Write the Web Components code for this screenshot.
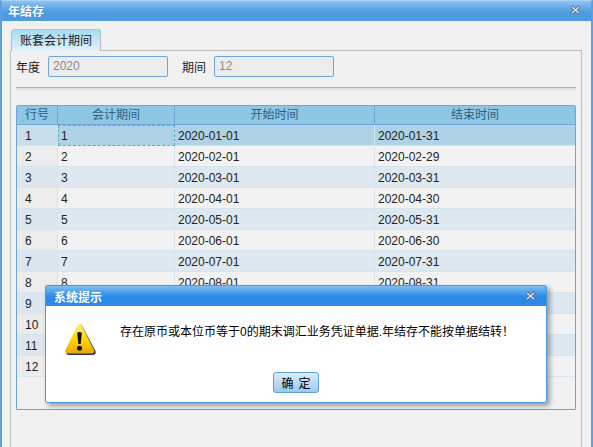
<!DOCTYPE html>
<html>
<head>
<meta charset="utf-8">
<style>
  html, body { margin: 0; height: 100%; background: #f1f1f1; overflow: hidden; }
  body { font: 12px "Liberation Sans", "Noto Sans CJK SC", sans-serif; color: #222; }
</style>
</head>
<body>
<year-window>
  <tab-panel label="账套会计期间">
    <div style="display:flex;align-items:center">
      <period-field label="年度" value="2020" style="margin-right:14px"></period-field>
      <period-field label="期间" value="12"></period-field>
    </div>
    <period-table></period-table>
  </tab-panel>
</year-window>
<alert-dialog heading="系统提示" message="存在原币或本位币等于0的期末调汇业务凭证单据.年结存不能按单据结转！"></alert-dialog>

<script>
const closeIcon = `<svg width="11" height="10" viewBox="0 0 11 10">
  <path d="M1.5 1.5 L9.5 8.5 M9.5 1.5 L1.5 8.5" stroke="#5f7390" stroke-width="3"/>
  <path d="M2 2 L9 8 M9 2 L2 8" stroke="#e4e9f0" stroke-width="1.2"/>
</svg>`;

class YearWindow extends HTMLElement {
  constructor() {
    super();
    this.attachShadow({ mode: "open" });
    this.shadowRoot.innerHTML = `
      <style>
        :host {
          display: flex;
          flex-direction: column;
          box-sizing: border-box;
          width: 593px;
          height: 447px;
          border-left: 2px solid #5a9fe2;
          border-right: 2px solid #5a9fe2;
          border-top: 1px solid #a9d2f5;
        }
        .title {
          height: 20px;
          flex: none;
          display: flex;
          align-items: center;
          justify-content: space-between;
          padding: 0 10px 2px 6px;
          box-sizing: border-box;
          background: linear-gradient(#8fc3f0, #4d9ce2 55%, #4d9ce2);
          color: #fff;
          font-weight: bold;
          font-size: 12px;
          text-shadow: 0 0 2px #3f7fbf;
        }
        svg { display: block; }
        .body { flex: 1; padding: 8px 9px 0 8px; min-height: 0; display: flex; flex-direction: column; }
      </style>
      <div class="title"><span>年结存</span>${closeIcon}</div>
      <div class="body"><slot></slot></div>
    `;
  }
}

class TabPanel extends HTMLElement {
  constructor() {
    super();
    this.attachShadow({ mode: "open" });
    this.shadowRoot.innerHTML = `
      <style>
        :host { display: flex; flex-direction: column; flex: 1; min-height: 0; }
        .tab {
          align-self: flex-start;
          margin-left: 1px;
          width: 90px;
          height: 22px;
          box-sizing: border-box;
          border: 1px solid #bdbdbd;
          border-bottom: 0;
          border-radius: 3px 3px 0 0;
          background: linear-gradient(#a5dcf2, #e3f3f9);
          text-align: center;
          line-height: 23px;
          font-size: 12px;
          position: relative;
          z-index: 1;
          margin-bottom: -1px;
        }
        .panel {
          flex: 1;
          border: 1px solid #bdbdbd;
          border-bottom: 0;
          padding: 5px 5px 0 5px;
          min-height: 0;
        }
      </style>
      <div class="tab"></div>
      <div class="panel"><slot></slot></div>
    `;
    this.shadowRoot.querySelector(".tab").textContent = this.getAttribute("label");
  }
}

class PeriodField extends HTMLElement {
  constructor() {
    super();
    this.attachShadow({ mode: "open" });
    this.shadowRoot.innerHTML = `
      <style>
        :host { display: flex; align-items: center; gap: 8px; }
        .val {
          width: 120px;
          height: 21px;
          box-sizing: border-box;
          border: 1px solid #6ba5da;
          border-radius: 2px;
          background: #ececec;
          color: #8a8a8a;
          line-height: 19px;
          padding-left: 4px;
          font-size: 12px;
        }
      </style>
      <span></span><div class="val"></div>
    `;
    this.shadowRoot.querySelector("span").textContent = this.getAttribute("label");
    this.shadowRoot.querySelector(".val").textContent = this.getAttribute("value");
  }
}

const pad = (n) => String(n).padStart(2, "0");
const monthEnds = [31, 29, 31, 30, 31, 30, 31, 31, 30, 31, 30, 31];

class PeriodTable extends HTMLElement {
  constructor() {
    super();
    this.attachShadow({ mode: "open" });
    let rows = "";
    monthEnds.forEach((end, i) => {
      const m = i + 1;
      rows += `
        <div class="row ${i === 0 ? "sel" : i % 2 === 0 ? "alt" : ""}">
          <div class="c no">${m}</div>
          <div class="c ${i === 0 ? "focus" : ""}">${m}</div>
          <div class="c">2020-${pad(m)}-01</div>
          <div class="c">2020-${pad(m)}-${end}</div>
        </div>`;
    });
    this.shadowRoot.innerHTML = `
      <style>
        :host {
          display: block;
          height: 305px;
          box-sizing: border-box;
          margin-top: 15px;
          border: 1px solid #6ba5da;
          border-radius: 2px 2px 0 0;
        }
        .row, .head { display: grid; grid-template-columns: 41px 117px 200px 1fr; }
        .head { height: 19px; grid-template-rows: 19px; background: #8fc6e4; color: #2d5f80; text-align: center; }
        .head div {
          border-right: 1px solid #6ba5da;
          border-bottom: 1px solid #6ba5da;
          box-sizing: border-box;
          padding-top: 1px;
          line-height: 17px;
        }
        .head div:last-child { border-right: 0; }
        .row { height: 21px; grid-template-rows: 21px; background: #f2f2f2; }
        .row.alt { background: #dde8f1; }
        .row.sel { background: #aed3e6; }
        .c {
          box-sizing: border-box;
          padding: 2px 0 0 3px;
          line-height: 18px;
          border-right: 1px solid #d6e4ef;
          border-bottom: 1px solid #d6e4ef;
          overflow: hidden;
          white-space: nowrap;
        }
        .c:last-child { border-right: 0; }
        .no { padding-left: 8px; background: #ececec; }
        .alt .no { background: #dde6ee; }
        .sel .no { background: #c9dcea; }
        .c.focus { outline: 1px dashed #5aa9c9; outline-offset: -1px; }
      </style>
      <div class="head"><div>行号</div><div>会计期间</div><div>开始时间</div><div>结束时间</div></div>
      ${rows}
    `;
  }
  connectedCallback() {
    // the groove above the table belongs to the form
    const rule = document.createElement("div");
    rule.style.cssText = "height:1px;background:#b4b4b4;border-bottom:2px solid #e0e0e0;margin-top:10px";
    this.parentNode.insertBefore(rule, this);
  }
}

class AlertDialog extends HTMLElement {
  constructor() {
    super();
    this.attachShadow({ mode: "open" });
    this.shadowRoot.innerHTML = `
      <style>
        :host {
          position: absolute;
          left: 45px;
          top: 285px;
          width: 502px;
          height: 118px;
          box-sizing: border-box;
          display: flex;
          flex-direction: column;
          background: #fff;
          border: 1px solid #4d98dc;
          border-radius: 2px;
          box-shadow: 3px 3px 5px rgba(0,0,0,.35);
        }
        .title {
          height: 20px;
          flex: none;
          display: flex;
          align-items: center;
          justify-content: space-between;
          padding: 0 10px 0 8px;
          background: linear-gradient(#7dbdf3, #2a8ae6 55%, #2a8ae6);
          color: #fff;
          font-weight: bold;
          font-size: 12px;
        }
        svg { display: block; }
        .main { display: flex; flex: none; padding: 18px 0 0 19px; height: 48px; }
        .msg { margin-left: 23px; padding-top: 1px; line-height: 14px; color: #000; font-size: 12px; white-space: nowrap; }
        .foot { display: flex; flex: none; justify-content: center; }
        button {
          width: 46px;
          height: 21px;
          padding: 0;
          border: 1px solid #5b9fd8;
          border-radius: 3px;
          background: linear-gradient(#dcedf9, #9cc8ec);
          font: inherit;
          font-size: 12px;
          color: #000;
          letter-spacing: 5px;
          text-indent: 5px;
        }
      </style>
      <div class="title"><span class="h"></span>${closeIcon}</div>
      <div class="main">
        <svg width="32" height="32" viewBox="0 0 32 32">
          <defs><linearGradient id="y" x1="0" y1="0" x2="0" y2="1">
            <stop offset="0" stop-color="#fff07a"/><stop offset=".55" stop-color="#fdd400"/><stop offset="1" stop-color="#e9a800"/>
          </linearGradient></defs>
          <path d="M15 .5 Q16.5 .5 17.5 2.5 L30.5 27 Q31.5 30.5 28 31 L3.5 31 Q.5 30.5 1.5 27 L12.5 2.5 Q13.5 .5 15 .5Z" fill="#2b2f6b"/>
          <path d="M14.5 0 Q16 0 17 2 L29 26 Q30 29 27 29.5 L2.5 29.5 Q-.5 29 .5 26 L12 2 Q13 0 14.5 0Z" fill="url(#y)"/>
          <path d="M12.2 9 Q14.5 7 16.8 9 L15.7 20 L13.3 20Z" fill="#111"/>
          <ellipse cx="14.5" cy="24.3" rx="2.6" ry="2.5" fill="#111"/>
        </svg>
        <div class="msg"></div>
      </div>
      <div class="foot"><button>确定</button></div>
    `;
    this.shadowRoot.querySelector(".h").textContent = this.getAttribute("heading");
    this.shadowRoot.querySelector(".msg").textContent = this.getAttribute("message");
  }
}

customElements.define("year-window", YearWindow);
customElements.define("tab-panel", TabPanel);
customElements.define("period-field", PeriodField);
customElements.define("period-table", PeriodTable);
customElements.define("alert-dialog", AlertDialog);
</script>
</body>
</html>
